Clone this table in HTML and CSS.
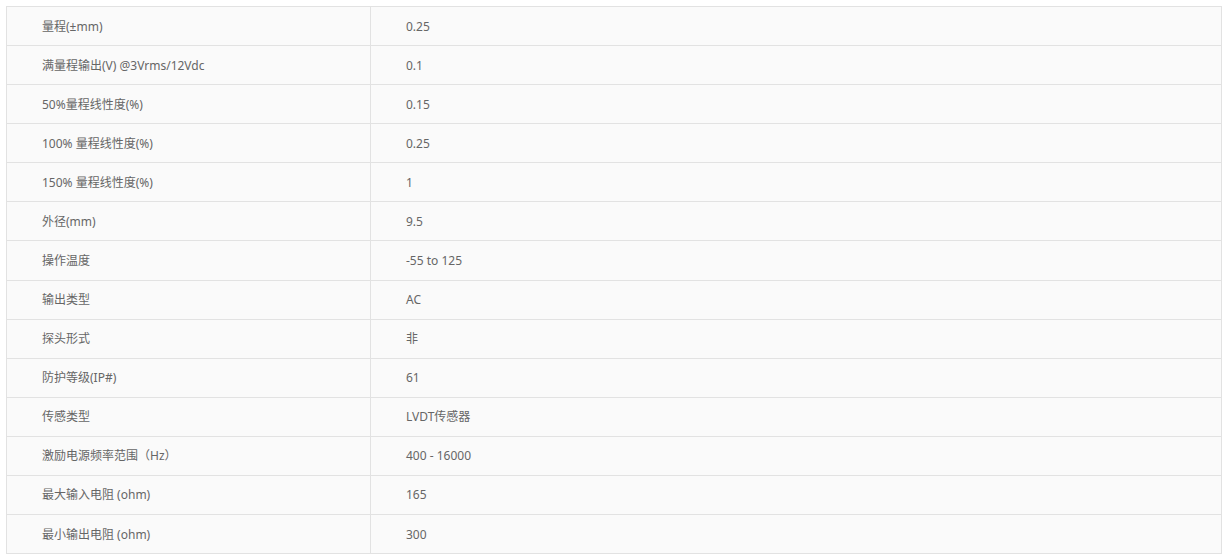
FILE: index.html
```html
<!DOCTYPE html>
<html lang="zh-CN">
<head>
    <meta charset="UTF-8">
    <meta name="viewport" content="width=device-width, initial-scale=1.0">
    <title>LVDT 参数</title>
    <link rel="stylesheet" href="styles.css">
</head>
<body>
    <table class="params">
        <tr><td class="name">量程(±mm)</td><td class="value">0.25</td></tr>
        <tr><td class="name">满量程输出(V) @3Vrms/12Vdc</td><td class="value">0.1</td></tr>
        <tr><td class="name">50%量程线性度(%)</td><td class="value">0.15</td></tr>
        <tr><td class="name">100% 量程线性度(%)</td><td class="value">0.25</td></tr>
        <tr><td class="name">150% 量程线性度(%)</td><td class="value">1</td></tr>
        <tr><td class="name">外径(mm)</td><td class="value">9.5</td></tr>
        <tr><td class="name">操作温度</td><td class="value">-55 to 125</td></tr>
        <tr><td class="name">输出类型</td><td class="value">AC</td></tr>
        <tr><td class="name">探头形式</td><td class="value">非</td></tr>
        <tr><td class="name">防护等级(IP#)</td><td class="value">61</td></tr>
        <tr><td class="name">传感类型</td><td class="value">LVDT传感器</td></tr>
        <tr><td class="name">激励电源频率范围（Hz）</td><td class="value">400 - 16000</td></tr>
        <tr><td class="name">最大输入电阻 (ohm)</td><td class="value">165</td></tr>
        <tr><td class="name">最小输出电阻 (ohm)</td><td class="value">300</td></tr>
    </table>
</body>
</html>
```

FILE: styles.css
```css
body {
    margin: 6px;
    background: #fff;
    font-family: "Noto Sans", "Noto Sans CJK SC", sans-serif;
    font-size: 12px;
    color: #666;
}
.params {
    width: 1216px;
    border-collapse: collapse;
    background-color: #fafafa;
    border: 1px solid #e2e2e2;
}
.params td {
    height: 37.08px;
    padding: 1px 0 0 35px;
    border: 1px solid #e2e2e2;
    vertical-align: middle;
    line-height: 16px;
}
.params td.name {
    width: 328px;
}
```
